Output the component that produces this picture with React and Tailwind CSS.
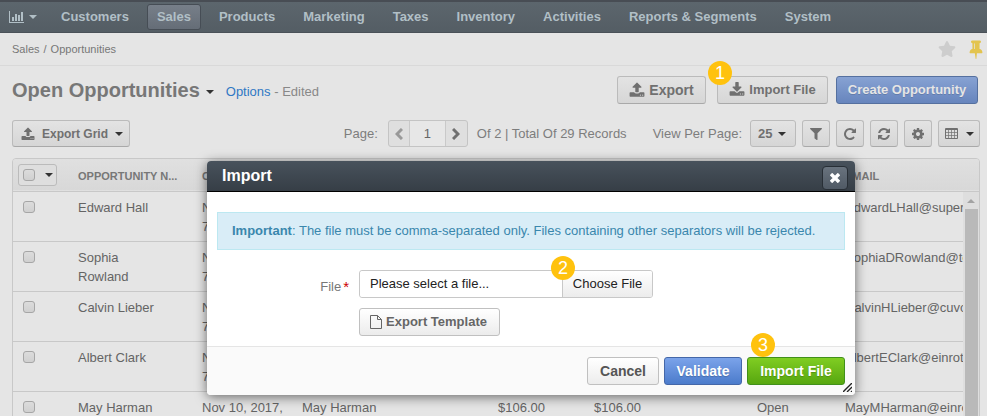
import React from "react";
import { FaFilter, FaStar } from "react-icons/fa";

const NAV = ["Customers", "Sales", "Products", "Marketing", "Taxes", "Inventory", "Activities", "Reports & Segments", "System"];

const ROWS = [
  { name: "Edward Hall", contact: "Edward Hall", email: "EdwardLHall@superrito.com" },
  { name: "Sophia Rowland", contact: "Sophia Rowland", email: "SophiaDRowland@teleworm.us" },
  { name: "Calvin Lieber", contact: "Calvin Lieber", email: "CalvinHLieber@cuvox.de" },
  { name: "Albert Clark", contact: "Albert Clark", email: "AlbertEClark@einrot.com" },
  { name: "May Harman", contact: "May Harman", email: "MayMHarman@einrot.com" },
];

const ICONS = {
  upload:
    "M1344 1472q0-26-19-45t-45-19-45 19-19 45 19 45 45 19 45-19 19-45zm256 0q0-26-19-45t-45-19-45 19-19 45 19 45 45 19 45-19 19-45zm128-224v320q0 40-28 68t-68 28h-1472q-40 0-68-28t-28-68v-320q0-40 28-68t68-28h427q21 56 70.5 92t110.5 36h256q61 0 110.5-36t70.5-92h427q40 0 68 28t28 68zm-325-648q-17 40-59 40h-256v448q0 26-19 45t-45 19h-256q-26 0-45-19t-19-45v-448h-256q-42 0-59-40-17-39 14-69l448-448q18-19 45-19t45 19l448 448q31 30 14 69z",
  download:
    "M1344 1344q0-26-19-45t-45-19-45 19-19 45 19 45 45 19 45-19 19-45zm256 0q0-26-19-45t-45-19-45 19-19 45 19 45 45 19 45-19 19-45zm128-224v320q0 40-28 68t-68 28h-1472q-40 0-68-28t-28-68v-320q0-40 28-68t68-28h465l135 136q58 56 136 56t136-56l136-136h464q40 0 68 28t28 68zm-325-569q17 41-14 70l-448 448q-18 19-45 19t-45-19l-448-448q-31-29-14-70 17-39 59-39h256v-448q0-26 19-45t45-19h256q26 0 45 19t19 45v448h256q42 0 59 39z",
  repeat:
    "M1664 256v448q0 26-19 45t-45 19h-448q-42 0-59-40-17-39 14-69l138-138q-148-137-349-137-104 0-198.5 40.5t-163.5 109.5-109.5 163.5-40.5 198.5 40.5 198.5 109.5 163.5 163.5 109.5 198.5 40.5q119 0 225-52t179-147q7-10 23-12 15 0 25 9l137 138q9 8 9.5 20.5t-7.5 22.5q-109 132-264 204.5t-327 72.5q-156 0-298-61t-245-164-164-245-61-298 61-298 164-245 245-164 298-61q147 0 284.5 55.5t244.5 156.5l130-129q29-31 70-14 39 17 39 59z",
  refresh:
    "M1639 1056q0 5-1 7-64 268-268 434.5t-478 166.5q-146 0-282.5-55t-243.5-157l-129 129q-19 19-45 19t-45-19-19-45v-448q0-26 19-45t45-19h448q26 0 45 19t19 45-19 45l-137 137q71 66 161 102t187 36q134 0 250-65t186-179q11-17 53-117 8-23 30-23h192q13 0 22.5 9.5t9.5 22.5zm25-800v448q0 26-19 45t-45 19h-448q-26 0-45-19t-19-45 19-45l138-138q-148-137-349-137-134 0-250 65t-186 179q-11 17-53 117-8 23-30 23h-199q-13 0-22.5-9.5t-9.5-22.5v-7q65-268 270-434.5t480-166.5q146 0 284 55.5t245 156.5l130-129q19-19 45-19t45 19 19 45z",
  cog: "M1152 896q0-106-75-181t-181-75-181 75-75 181 75 181 181 75 181-75 75-181zm512-109v222q0 12-8 23t-20 13l-185 28q-19 54-39 91 35 50 107 138 10 12 10 25t-9 23q-27 37-99 108t-94 71q-12 0-26-9l-138-108q-44 23-91 38-16 136-29 186-7 28-36 28h-222q-14 0-24.5-8.5t-11.5-21.5l-28-184q-49-16-90-37l-141 107q-10 9-25 9-14 0-25-11-126-114-165-168-7-10-7-23 0-12 8-23 15-21 51-66.5t54-70.5q-27-50-41-99l-183-27q-13-2-21-12.5t-8-23.5v-222q0-12 8-23t19-13l186-28q14-46 39-92-40-57-107-138-10-12-10-24 0-10 9-23 26-36 98.5-107.5t94.5-71.5q13 0 26 10l138 107q44-23 91-38 16-136 29-186 7-28 36-28h222q14 0 24.5 8.5t11.5 21.5l28 184q49 16 90 37l142-107q9-9 24-9 13 0 25 10 129 119 165 170 7 8 7 22 0 12-8 23-15 21-51 66.5t-54 70.5q26 50 41 98l183 28q13 2 21 12.5t8 23.5z",
  pin: "M800 864v-448q0-14-9-23t-23-9-23 9-9 23v448q0 14 9 23t23 9 23-9 9-23zm672 352q0 26-19 45t-45 19h-429l-51 483q-2 12-10.5 20.5t-20.5 8.5h-1q-27 0-32-27l-76-485h-404q-26 0-45-19t-19-45q0-123 78.5-221.5t177.5-98.5v-512q-52 0-90-38t-38-90 38-90 90-38h640q52 0 90 38t38 90-38 90-90 38v512q99 0 177.5 98.5t78.5 221.5z",
};

const dimButton =
  "flex items-center rounded-[3px] border border-[#bbb] border-b-[#a9a9a9] bg-linear-to-b from-[#e3e3e3] to-[#d6d6d6] font-bold text-[#707070]";
const modalButton = "h-7 rounded-[3px] border font-bold";

function Icon({ name, size = 14 }) {
  return (
    <svg width={size} height={size} className="shrink-0" viewBox="0 0 1792 1792" fill="currentColor" aria-hidden="true">
      <path d={ICONS[name]} />
    </svg>
  );
}

function Caret({ className = "text-[#333]" }) {
  return (
    <svg className={"h-1 w-2 shrink-0 " + className} viewBox="0 0 8 4" fill="currentColor" aria-hidden="true">
      <path d="M0 0h8L4 4z" />
    </svg>
  );
}

function ChartIcon() {
  return (
    <svg width="15" height="12" viewBox="0 0 15 12" fill="currentColor" aria-hidden="true">
      <path d="M0 0h1v11h14v1H0zM3 6h2v4H3zM6 3h2v7H6zM9 4h2v6H9zM12 1h2v9h-2z" />
    </svg>
  );
}

function GridIcon() {
  return (
    <svg width="13" height="11" viewBox="0 0 13 11" fill="none" stroke="currentColor" aria-hidden="true">
      <path d="M.5 .5h12v10H.5zM1 1.5h11" />
      <path d="M1 4.5h11M1 7.5h11M3.5 1v9M6.5 1v9M9.5 1v9" strokeOpacity="0.7" />
    </svg>
  );
}

function Chevron({ d }) {
  return (
    <svg width="8" height="12" viewBox="0 0 8 12" fill="none" stroke="currentColor" strokeWidth="3" aria-hidden="true">
      <path d={d} />
    </svg>
  );
}

function FileIcon() {
  return (
    <svg width="12" height="14" viewBox="0 0 12 14" fill="none" stroke="currentColor" aria-hidden="true">
      <path d="M.5 .5h7l4 4v9H.5zM7.5 .5v4h4" />
    </svg>
  );
}

function Step({ n, className }) {
  return (
    <span className={"absolute flex size-6 items-center justify-center rounded-full bg-[#ffc20e] text-[18px] font-normal text-white " + className}>
      {n}
    </span>
  );
}

function Tick({ label }) {
  return (
    <input
      type="checkbox"
      aria-label={label}
      className="block size-3 appearance-none rounded-[3px] border border-[#a6a6a6] bg-linear-to-b from-[#dcdcdc] to-[#d0d0d0]"
    />
  );
}

function NavBar() {
  return (
    <nav className="flex h-[33px] shrink-0 items-center gap-2 border-t-2 border-b border-t-[#484d54] border-b-[#4a5158] bg-linear-to-b from-[#5c666d] to-[#545d64] pl-[9px] text-[13px] font-bold text-[#b1bfc6]">
      <button aria-label="Dashboards" className="flex w-[34px] items-center gap-[5px]">
        <ChartIcon />
        <Caret className="text-[#b1bfc6]" />
      </button>
      {NAV.map((item) => (
        <a
          key={item}
          href="#"
          className={
            item === "Sales"
              ? "flex h-[26px] items-center rounded-[3px] border border-[#464d55] bg-linear-to-b from-[#777f89] to-[#656d77] px-[9px] whitespace-nowrap"
              : "flex h-[26px] items-center border border-transparent px-[9px] whitespace-nowrap"
          }
        >
          {item}
        </a>
      ))}
    </nav>
  );
}

function PageHeader() {
  return (
    <header>
      <div className="flex h-[33px] items-center justify-between border-b border-[#d9d9d9] pl-3 text-[11px] text-[#777]">
        <div className="flex gap-1">
          <a href="#">Sales</a>
          <span>/</span>
          <a href="#">Opportunities</a>
        </div>
        <div className="flex items-center gap-2.5 pr-px">
          <button aria-label="Add to favorites" className="text-[#cdcdcd]">
            <FaStar size={18} />
          </button>
          <button aria-label="Pin page" className="text-[#e3c44f]">
            <Icon name="pin" size={20} />
          </button>
        </div>
      </div>
      <div className="flex items-center px-3 pt-[10px]">
        <h1 className="text-[20px] leading-7 font-bold whitespace-nowrap text-[#777]">Open Opportunities</h1>
        <button aria-label="Switch view" className="ml-1.5 pt-1">
          <Caret />
        </button>
        <p className="ml-3 pt-1 text-[13px] whitespace-nowrap text-[#888]">
          <a href="#" className="text-[#3078c4]">Options</a> - Edited
        </p>
        <div className="-mr-[3px] ml-auto flex">
          <button className={dimButton + " h-7 w-[89px] justify-center gap-1 text-[14px]"}>
            <Icon name="upload" size={16} />
            Export
          </button>
          <div className="relative ml-[11px]">
            <button className={dimButton + " h-7 w-[111px] justify-center gap-1 text-[13px]"}>
              <Icon name="download" size={16} />
              Import File
            </button>
            <Step n={1} className="-top-[15px] -left-[9px]" />
          </div>
          <button className="ml-2 h-7 w-[142px] rounded-[3px] border border-[#55709f] bg-linear-to-b from-[#87a2d3] to-[#6785bd] text-[13px] font-bold text-[#e5e5e5] text-shadow-2xs">
            Create Opportunity
          </button>
        </div>
      </div>
    </header>
  );
}

function Toolbar() {
  return (
    <div className="flex items-center pt-4 pr-[7px] pl-3 text-[13px] whitespace-nowrap text-[#7d7d7d]">
      <button className={dimButton + " h-[27px] w-[118px] gap-[7px] pl-2 text-[12px]"}>
        <Icon name="upload" />
        Export Grid
        <Caret />
      </button>
      <div className="ml-auto flex items-center">
        <label htmlFor="page">Page:</label>
        <div className="ml-2.5 flex h-[27px] w-20 overflow-hidden rounded-[3px] border border-[#c4c4c4] bg-[#dfdfdf]">
          <button aria-label="Previous page" className="flex w-5 items-center justify-center text-[#999]">
            <Chevron d="M7 1 2 6l5 5" />
          </button>
          <input id="page" defaultValue="1" className="w-9 min-w-0 flex-1 border-x border-[#c9c9c9] bg-[#e7e7e7] text-center text-[#666]" />
          <button aria-label="Next page" className="flex w-[21px] items-center justify-center text-[#707070]">
            <Chevron d="M1 1l5 5-5 5" />
          </button>
        </div>
        <span className="ml-[9px]">Of 2 | Total Of 29 Records</span>
      </div>
      <div className="ml-[26px] flex items-center gap-1.5">
        <label htmlFor="per-page" className="mr-0.5">View Per Page:</label>
        <div className="relative">
          <select id="per-page" className="h-[27px] w-[46px] appearance-none rounded-[3px] border border-[#bbb] bg-linear-to-b from-[#e3e3e3] to-[#d6d6d6] pl-[7px] text-[13px] font-bold text-[#707070]">
            <option>25</option>
            <option>50</option>
          </select>
          <span className="pointer-events-none absolute inset-y-0 right-2.5 flex items-center">
            <Caret />
          </span>
        </div>
        <button aria-label="Filter" className={dimButton + " h-[27px] w-7 justify-center"}>
          <FaFilter size={12} />
        </button>
        <button aria-label="Reset" className={dimButton + " h-[27px] w-7 justify-center"}>
          <Icon name="repeat" />
        </button>
        <button aria-label="Refresh" className={dimButton + " h-[27px] w-7 justify-center"}>
          <Icon name="refresh" />
        </button>
        <button aria-label="Grid settings" className={dimButton + " h-[27px] w-7 justify-center"}>
          <Icon name="cog" />
        </button>
        <button aria-label="Grid view" className={dimButton + " h-[27px] w-[42px] justify-center gap-2"}>
          <GridIcon />
          <Caret />
        </button>
      </div>
    </div>
  );
}

function OpportunityGrid() {
  return (
    <div className="relative mt-[11px] mr-[7px] ml-3 overflow-hidden rounded-t-[4px] border border-[#c8c8c8]">
      <table className="w-full table-fixed text-left text-[13px] leading-[19px] text-[#646464]">
        <colgroup>
          <col className="w-[57px]" />
          <col className="w-[124px]" />
          <col className="w-[100px]" />
          <col className="w-[196px]" />
          <col className="w-[96px]" />
          <col className="w-[163px]" />
          <col className="w-[88px]" />
          <col />
        </colgroup>
        <thead>
          <tr className="h-8 border-b border-[#c8c8c8] bg-linear-to-b from-[#e0e0e0] to-[#d8d8d8] text-[11px] whitespace-nowrap text-[#777]">
            <th className="pl-[5px]">
              <div className="flex h-[22px] w-[39px] items-center gap-2.5 rounded-[3px] border border-[#bbb] bg-[#dedede] pl-1">
                <Tick label="Select all" />
                <button aria-label="Selection options" className="flex">
                  <Caret />
                </button>
              </div>
            </th>
            <th className="px-2 pt-[3px]">OPPORTUNITY N...</th>
            <th className="px-2 pt-[3px]">CREATED AT</th>
            <th className="px-2 pt-[3px]">CONTACT NAME</th>
            <th className="px-2 pt-[3px]">BUDGET</th>
            <th className="px-2 pt-[3px]">REVENUE</th>
            <th className="px-2 pt-[3px]">STATUS</th>
            <th className="px-2 pt-[3px]">EMAIL</th>
          </tr>
        </thead>
        <tbody>
          {ROWS.map((row) => (
            <tr key={row.name} className="h-[50px] border-b border-[#c8c8c8] align-top">
              <td className="pt-[9px] pl-2.5">
                <Tick label={"Select " + row.name} />
              </td>
              <td className="pt-1.5 pr-8 pl-2">{row.name}</td>
              <td className="px-2 pt-1.5">Nov 10, 2017, 7:12 AM</td>
              <td className="px-2 pt-1.5">{row.contact}</td>
              <td className="px-2 pt-1.5">$106.00</td>
              <td className="px-2 pt-1.5">$106.00</td>
              <td className="px-2 pt-1.5">Open</td>
              <td className="overflow-hidden pt-1.5 pl-2 whitespace-nowrap">{row.email}</td>
            </tr>
          ))}
        </tbody>
      </table>
      <div className="absolute top-[33px] right-0 bottom-0 flex w-4 flex-col items-center bg-[#dedede] pt-[7px]">
        <Caret className="rotate-180 text-[#a3a3a3]" />
        <div className="mt-1.5 w-[13px] flex-1 bg-[#b9b9b9]" />
      </div>
    </div>
  );
}

function ImportDialog() {
  return (
    <section
      role="dialog"
      aria-labelledby="import-title"
      className="absolute top-[161px] left-[207px] w-[648px] rounded-[4px] bg-white shadow-[0_2px_12px_rgba(0,0,0,0.55)]"
    >
      <header className="flex h-[31px] items-center justify-between rounded-t-[4px] border-b border-black bg-linear-to-b from-[#48525c] to-[#363e46] pr-[7px] pl-[15px]">
        <h2 id="import-title" className="text-[16px] leading-7 font-bold text-white">Import</h2>
        <button aria-label="Close" className="mt-1 flex h-6 w-[26px] items-center justify-center rounded-[4px] border border-[#282f36] bg-linear-to-b from-[#69737e] to-[#505a65] text-white">
          <svg width="10" height="10" viewBox="0 0 10 10" stroke="currentColor" strokeWidth="3.4" aria-hidden="true">
            <path d="M1 1l8 8M9 1L1 9" />
          </svg>
        </button>
      </header>
      <div className="px-2.5 pt-5 pb-[10px]">
        <p className="border border-[#bce8f1] bg-[#d9edf7] px-3.5 py-2 text-[13px] leading-5 whitespace-nowrap text-[#3a87ad]">
          <strong>Important</strong>: The file must be comma-separated only. Files containing other separators will be rejected.
        </p>
        <div className="flex pt-5">
          <label htmlFor="file-name" className="flex w-[132px] justify-end gap-0.5 pt-[7px] text-[13px] leading-5 text-[#777]">
            File<span className="text-[15px] leading-5 text-[#c00]">*</span>
          </label>
          <div className="ml-2.5">
            <div className="relative flex h-7 w-[294px] rounded-[3px] border border-[#c8c8c8] text-[13px] text-[#222]">
              <input id="file-name" readOnly value="Please select a file..." className="min-w-0 flex-1 rounded-l-[3px] bg-white px-2.5 outline-none" />
              <button className="w-[90px] rounded-r-[2px] border-l border-[#c8c8c8] bg-linear-to-b from-white to-[#ececec]">Choose File</button>
              <Step n={2} className="-top-[15px] left-[191px]" />
            </div>
            <button className={modalButton + " mt-2.5 flex w-[141px] items-center justify-center gap-1 border-[#c0c0c0] bg-linear-to-b from-white to-[#ececec] pr-0.5 text-[13px] text-[#666]"}>
              <FileIcon />
              Export Template
            </button>
          </div>
        </div>
      </div>
      <footer className="relative flex justify-end gap-[5px] rounded-b-[4px] border-t border-[#e5e5e5] bg-[#fafafa] px-2.5 py-[10px] text-[14px]">
        <button className={modalButton + " w-[72px] border-[#c0c0c0] bg-linear-to-b from-white to-[#ececec] text-[#555]"}>Cancel</button>
        <button className={modalButton + " w-[78px] border-[#4467a8] bg-linear-to-b from-[#7ba3ea] to-[#4b7bcb] text-white text-shadow-xs"}>Validate</button>
        <div className="relative">
          <button className={modalButton + " w-[98px] border-[#41901a] bg-linear-to-b from-[#80cd22] to-[#57a70f] text-white text-shadow-xs"}>Import File</button>
          <Step n={3} className="-top-6 left-1" />
        </div>
        <svg className="absolute right-[3px] bottom-[3px]" width="9" height="9" viewBox="0 0 9 9" stroke="#222" strokeWidth="1.4" aria-hidden="true">
          <path d="M0 9L9 0M4 9l5-5M8 9l1-1" />
        </svg>
      </footer>
    </section>
  );
}

export default function App() {
  return (
    <div className="relative flex h-screen flex-col overflow-hidden bg-[#e5e5e5] font-['Liberation_Sans',Arial,sans-serif]">
      <NavBar />
      <main>
        <PageHeader />
        <Toolbar />
        <OpportunityGrid />
      </main>
      <ImportDialog />
    </div>
  );
}
